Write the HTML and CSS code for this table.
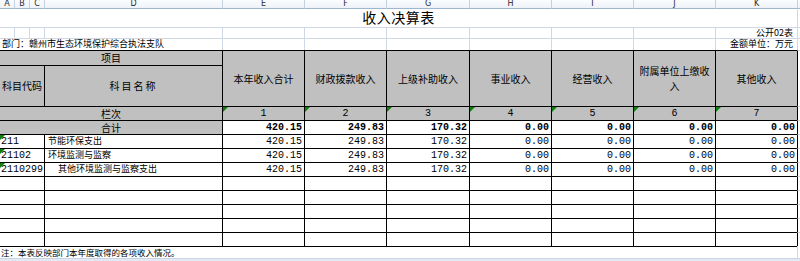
FILE: index.html
```html
<!DOCTYPE html>
<html lang="zh-CN">
<head>
<meta charset="utf-8">
<title>收入决算表</title>
<link rel="stylesheet" href="styles.css">
</head>
<body>
<div class="sheet">
  <!-- column letters -->
  <div class="hd first">A</div>
  <div class="hd">B</div>
  <div class="hd">C</div>
  <div class="hd">D</div>
  <div class="hd">E</div>
  <div class="hd">F</div>
  <div class="hd">G</div>
  <div class="hd">H</div>
  <div class="hd">I</div>
  <div class="hd">J</div>
  <div class="hd">K</div>
  <div class="hd"></div>

  <!-- title -->
  <div class="title span11">收入决算表</div>
  <div class="g"></div>

  <!-- row: 公开02表 -->
  <div class="g first top"></div>
  <div class="g top"></div>
  <div class="g top"></div>
  <div class="g top"></div>
  <div class="g top"></div>
  <div class="g top"></div>
  <div class="g top"></div>
  <div class="g top"></div>
  <div class="g top"></div>
  <div class="g top"></div>
  <div class="g top right txt">公开02表</div>
  <div class="g top"></div>

  <!-- row: 部门 -->
  <div class="g first top span4 txt">部门：赣州市生态环境保护综合执法支队</div>
  <div class="g top"></div>
  <div class="g top"></div>
  <div class="g top"></div>
  <div class="g top"></div>
  <div class="g top"></div>
  <div class="g top"></div>
  <div class="g top right txt">金额单位：万元</div>
  <div class="g top"></div>

  <!-- header rows -->
  <div class="t gray first center span4 hdr">项目</div>
  <div class="t gray center rows2 hdr">本年收入合计</div>
  <div class="t gray center rows2 hdr">财政拨款收入</div>
  <div class="t gray center rows2 hdr">上级补助收入</div>
  <div class="t gray center rows2 hdr">事业收入</div>
  <div class="t gray center rows2 hdr">经营收入</div>
  <div class="t gray center rows2 hdr two"><span>附属单位上缴收<br>入</span></div>
  <div class="t gray center rows2 hdr">其他收入</div>
  <div class="edge rows2"></div>
  <div class="t gray first span3 hdr">科目代码</div>
  <div class="t gray center hdr wide">科目名称</div>

  <!-- 栏次 -->
  <div class="t gray first center span4 hdr">栏次</div>
  <div class="t gray center num mark">1</div>
  <div class="t gray center num mark">2</div>
  <div class="t gray center num mark">3</div>
  <div class="t gray center num mark">4</div>
  <div class="t gray center num mark">5</div>
  <div class="t gray center num mark">6</div>
  <div class="t gray center num mark">7</div>
  <div class="edge"></div>

  <!-- 合计 -->
  <div class="t gray first center span4 hdr">合计</div>
  <div class="t right num bold">420.15</div>
  <div class="t right num bold">249.83</div>
  <div class="t right num bold">170.32</div>
  <div class="t right num bold">0.00</div>
  <div class="t right num bold">0.00</div>
  <div class="t right num bold">0.00</div>
  <div class="t right num bold">0.00</div>
  <div class="edge"></div>

  <!-- data -->
  <div class="t first span3 num mark">211</div>
  <div class="t txt name">节能环保支出</div>
  <div class="t right num">420.15</div>
  <div class="t right num">249.83</div>
  <div class="t right num">170.32</div>
  <div class="t right num">0.00</div>
  <div class="t right num">0.00</div>
  <div class="t right num">0.00</div>
  <div class="t right num">0.00</div>
  <div class="edge"></div>

  <div class="t first span3 num mark">21102</div>
  <div class="t txt name">环境监测与监察</div>
  <div class="t right num">420.15</div>
  <div class="t right num">249.83</div>
  <div class="t right num">170.32</div>
  <div class="t right num">0.00</div>
  <div class="t right num">0.00</div>
  <div class="t right num">0.00</div>
  <div class="t right num">0.00</div>
  <div class="edge"></div>

  <div class="t first span3 num mark">2110299</div>
  <div class="t txt name sub">其他环境监测与监察支出</div>
  <div class="t right num">420.15</div>
  <div class="t right num">249.83</div>
  <div class="t right num">170.32</div>
  <div class="t right num">0.00</div>
  <div class="t right num">0.00</div>
  <div class="t right num">0.00</div>
  <div class="t right num">0.00</div>
  <div class="edge"></div>

  <div class="t first span3"></div><div class="t"></div><div class="t"></div><div class="t"></div><div class="t"></div><div class="t"></div><div class="t"></div><div class="t"></div><div class="t"></div><div class="edge"></div>
  <div class="t first span3"></div><div class="t"></div><div class="t"></div><div class="t"></div><div class="t"></div><div class="t"></div><div class="t"></div><div class="t"></div><div class="t"></div><div class="edge"></div>
  <div class="t first span3"></div><div class="t"></div><div class="t"></div><div class="t"></div><div class="t"></div><div class="t"></div><div class="t"></div><div class="t"></div><div class="t"></div><div class="edge"></div>
  <div class="t first span3"></div><div class="t"></div><div class="t"></div><div class="t"></div><div class="t"></div><div class="t"></div><div class="t"></div><div class="t"></div><div class="t"></div><div class="edge"></div>
  <div class="t first span3"></div><div class="t"></div><div class="t"></div><div class="t"></div><div class="t"></div><div class="t"></div><div class="t"></div><div class="t"></div><div class="t"></div><div class="edge"></div>

  <!-- note -->
  <div class="note span11 txt">注：本表反映部门本年度取得的各项收入情况。</div>
  <div class="g"></div>

  <!-- band -->
  <div class="band span12"></div>
</div>
</body>
</html>
```

FILE: styles.css
```css
html, body {
  margin: 0;
  padding: 0;
  background: #ffffff;
}

body {
  font-family: "Noto Sans CJK SC", "Liberation Sans", sans-serif;
  font-size: 9px;
  color: #000;
  overflow: hidden;
}

.sheet {
  display: grid;
  width: 800px;
  height: 261px;
  grid-template-columns: 14px 15px 15px 178px 82px 82px 83px 82px 82px 82px 82px 3px;
  grid-template-rows: 9px 18px 11px 12px 15px 41px 14px 14px 14px 14px 14px 14px 14px 14px 14px 14px 12px 3px;
  overflow: hidden;
}

.sheet > div {
  box-sizing: border-box;
  min-width: 0;
  display: flex;
  align-items: center;
  white-space: nowrap;
  line-height: 1.15;
}

/* column letter header */
.sheet > .hd {
  background: linear-gradient(#fbfcfe, #eef2f8);
  border-left: 1px solid #c6d2e2;
  border-bottom: 1px solid #9eb6ce;
  justify-content: center;
  align-items: flex-end;
  font-family: "DejaVu Sans", sans-serif;
  font-size: 8px;
  line-height: 8px;
  color: #2b2b2b;
}
.hd.first { border-left: none; }

/* title */
.title {
  justify-content: center;
  font-size: 14px;
  font-weight: 400;
  padding-bottom: 1px;
  letter-spacing: 0.5px;
}

/* light grid cells */
.g {
  border-left: 1px solid #d0d7e5;
}
.g.first { border-left: none; }
.g.top { border-top: 1px solid #d0d7e5; }

.txt { padding: 0 2px; }
.right { justify-content: flex-end; }
.g.right { padding-right: 4px; }
.center { justify-content: center; text-align: center; }

/* table cells */
.t {
  position: relative;
  border-top: 1px solid #000;
  border-left: 1px solid #000;
}
.t.first { border-left: none; }
.gray { background: #c0c0c0; }

.hdr {
  font-size: 10px;
  padding: 0 2px;
}
.hdr.wide { letter-spacing: 2px; }
.hdr.two span {
  display: block;
  line-height: 15px;
  padding-bottom: 2px;
}

.rows2 { grid-row: span 2; white-space: normal; }
.span3 { grid-column: span 3; }
.span4 { grid-column: span 4; }
.span11 { grid-column: span 11; }
.span12 { grid-column: span 12; }

.edge {
  border-left: 1px solid #000;
  border-top: 1px solid #d0d7e5;
}

.num {
  font-family: "Liberation Mono", monospace;
  font-size: 10px;
}
.t.right { padding-right: 2px; }
.t.num.span3 { padding-left: 1px; }
.bold { font-weight: 700; }

.name { padding-left: 3px; }
.name.sub { padding-left: 13px; }

.mark::before {
  content: "";
  position: absolute;
  top: 0;
  left: 0;
  border-top: 5px solid #0a820a;
  border-right: 5px solid transparent;
}

.sheet > .note {
  border-top: 1px solid #000;
  padding-left: 1px;
  font-size: 8.5px;
}

.band {
  background: #e2e9f3;
  border-top: 1px solid #c9d5e4;
}
```
